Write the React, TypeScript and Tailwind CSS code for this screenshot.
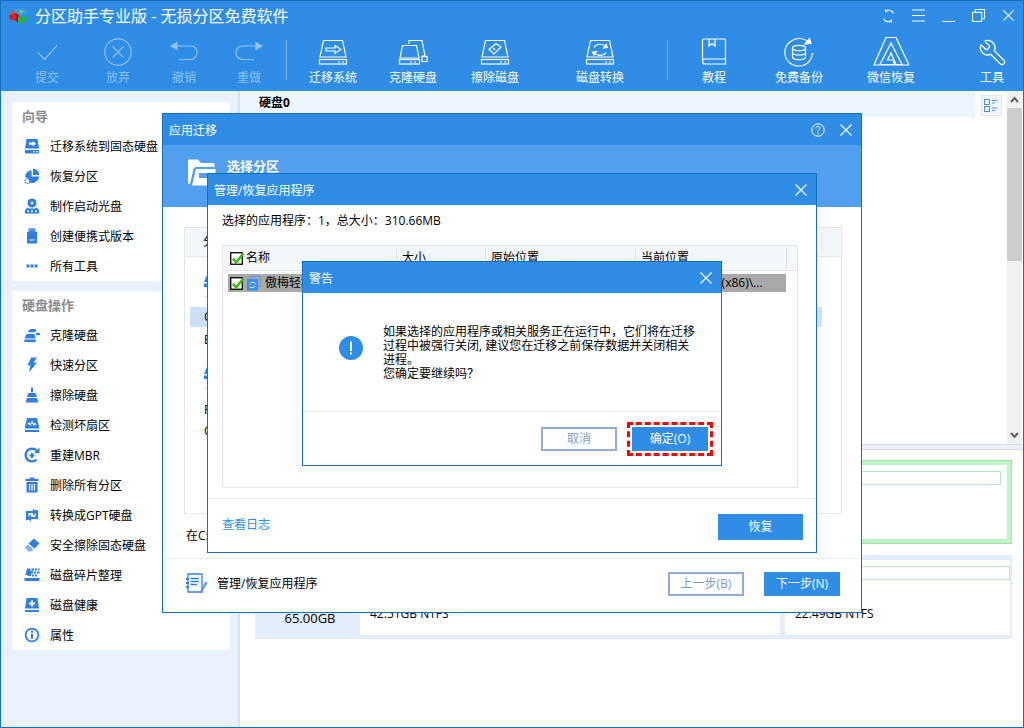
import React from "react";
import { Wrench } from "lucide-react";

const BLUE = "#2f7fe3";

function TIcon({ children }: { children: React.ReactNode }) {
  return (
    <svg width="36" height="30" viewBox="0 0 36 30" fill="none" stroke="currentColor" strokeWidth="1.2">
      {children}
    </svg>
  );
}

const DiskBase = () => (
  <>
    <path d="M8.5 3.5H27.5L31 20H5Z" />
    <rect x="4.5" y="22.5" width="27" height="4.5" />
    <path d="M23 25h2M27 25h2" />
  </>
);

const toolIcons: Record<string, React.ReactNode> = {
  check: <path d="M9 15.5L15.5 22.5L28 8.5" />,
  cancel: (
    <>
      <circle cx="18" cy="15" r="13.2" />
      <path d="M12.5 9.5L23.5 20.5M23.5 9.5L12.5 20.5" />
    </>
  ),
  undo: (
    <>
      <path d="M9 9H24.5C28.5 9 31 12 31 15.5C31 19.5 28 22.5 24.5 22.5H13" />
      <path d="M5 9L11 5.5V12.5Z" fill="currentColor" />
    </>
  ),
  redo: (
    <>
      <path d="M27 9H11.5C7.5 9 5 12 5 15.5C5 19.5 8 22.5 11.5 22.5H23" />
      <path d="M31 9L25 5.5V12.5Z" fill="currentColor" />
    </>
  ),
  migrate: (
    <>
      <DiskBase />
      <path d="M11 11H20V8.5L26 12.5L20 16.5V14H11Z" />
    </>
  ),
  clone: (
    <>
      <path d="M14 7V3.5H27L30 19H27" />
      <path d="M7.5 8.5H21.5L24 21H5Z" />
      <rect x="4.5" y="22.5" width="20" height="4.5" />
      <rect x="27" y="19.5" width="5" height="5" />
      <path d="M15 25h2M19 25h2" />
    </>
  ),
  erase: (
    <>
      <DiskBase />
      <path d="M12 12.5L19 6.5L24 10L17 17Z" />
      <path d="M16 11l2 2" />
    </>
  ),
  convert: (
    <>
      <DiskBase />
      <path d="M12 10.5C14 6.5 21 6 23.5 10M24 15.5C22 19 15 19.5 12.5 15.5" />
      <path d="M25.5 10.5L21.5 11L24 7.5Z M10.5 15L14.5 14.5L12 18Z" fill="currentColor" />
    </>
  ),
  book: (
    <>
      <path d="M9 27C7 27 6.5 25.5 6.5 24V3.5C6.5 2.5 7 2 8 2H28.5C29 2 29.5 2.5 29.5 3V27H9Z" />
      <path d="M6.5 24C6.5 22.5 7.5 22 9 22H29.5" />
      <path d="M13 2V9L16 6.5L19 9V2" />
    </>
  ),
  backup: (
    <>
      <path d="M28 5.5C24 1.5 18 .5 13 2.5C6.5 5 3 11 4 17.5C5 24 11 29 18 29C25 29 31 23.5 31.5 16" />
      <path d="M30 6.5L24 7L28.5 1.5Z" fill="currentColor" />
      <ellipse cx="18" cy="11" rx="6.5" ry="2.6" />
      <path d="M11.5 11V20C11.5 21.5 14.5 22.6 18 22.6C21.5 22.6 24.5 21.5 24.5 20V11M11.5 15.5C11.5 17 14.5 18 18 18C21.5 18 24.5 17 24.5 15.5" />
    </>
  ),
  aomei: (
    <>
      <path d="M13 .5H23L36 28H1Z" />
      <path d="M18 6L29 27.5H23L18 16L14.5 23H20L21.5 27.5H7Z" />
    </>
  ),
};

function Tool({
  icon,
  label,
  cls,
  off,
}: {
  icon: string;
  label: string;
  cls: string;
  off?: boolean;
}) {
  return (
    <div className={`${cls} flex flex-col items-center ${off ? "text-[#8fc0f0]" : "text-white"}`}>
      <div className="flex h-[30px] items-center justify-center">
        {icon === "tool" ? (
          <Wrench size={29} strokeWidth={1.1} className="-scale-x-100" />
        ) : (
          <TIcon>{toolIcons[icon]}</TIcon>
        )}
      </div>
      <span className="mt-[3px] text-[12px] leading-[16px] whitespace-nowrap">{label}</span>
    </div>
  );
}

function SIcon({ children }: { children: React.ReactNode }) {
  return (
    <svg width="16" height="16" viewBox="0 0 16 16" fill={BLUE} className="shrink-0">
      {children}
    </svg>
  );
}

const side: Record<string, React.ReactNode> = {
  a: (
    <path fillRule="evenodd" d="M2.5 1H13.5L15 10.5H1ZM1 12H15V15.5H1ZM5 4.6V6.8H8.6V8.5L12 5.7L8.6 2.9V4.6ZM9 13.2v1h2v-1ZM12 13.2v1h2v-1Z" />
  ),
  b: (
    <>
      <path d="M9 .6C12.5 1 15 3.5 15.4 7H9Z" />
      <path d="M7.6 2.2V8.4H15.2C14.6 12.2 11.8 15 8 15C7 15 6.3 14.8 5.6 14.6C5.9 11.5 4 9.5 1.2 9C1 5.5 3.8 2.4 7.6 2.2Z" />
      <circle cx="3.4" cy="13" r="2.4" fill="none" stroke={BLUE} strokeWidth="1.3" strokeDasharray="1.5 .7" />
    </>
  ),
  c: (
    <path fillRule="evenodd" d="M8 .5A4.5 4.5 0 1 1 8 9.5A4.5 4.5 0 1 1 8 .5ZM8 3.6A1.4 1.4 0 1 0 8 6.4A1.4 1.4 0 1 0 8 3.6ZM3.5 9.5L5 10.5H11L12.5 9.5L15 12V15.5H1V12ZM3 12.5V14H5V12.5ZM7 12.5V14H9V12.5ZM11 12.5V14H13V12.5Z" />
  ),
  d: (
    <path fillRule="evenodd" d="M4.5 .5H11.5V4H13V15.5H3V4H4.5ZM6 2V3H7V2ZM9 2V3H10V2ZM5.5 11.5V12.5H10.5V11.5Z" />
  ),
  e: (
    <>
      <rect x="2.5" y="6.5" width="3" height="3" />
      <rect x="6.5" y="6.5" width="3" height="3" />
      <rect x="10.5" y="6.5" width="3" height="3" />
    </>
  ),
  f: (
    <>
      <path d="M4 5.2C4.5 3 6 2 8 2H11.5L12.5 4.5H11V5.2Z" />
      <rect x="12" y="6" width="4" height="2" />
      <path d="M2.5 7H10.5L11.5 11.5H.5Z" />
      <rect x=".3" y="12.5" width="11.5" height="2.6" />
    </>
  ),
  g: <path d="M7 .5H13L9.5 5.5H13L5 15.5L6.5 8.5H3.5Z" />,
  h: (
    <>
      <rect x="7" y=".5" width="2" height="5" />
      <path d="M4.5 6H11.5L13 10H3Z" />
      <path d="M3 11H13L14.5 15.5H1.5Z" />
    </>
  ),
  i: (
    <path fillRule="evenodd" d="M3 1H13L15 9.5V11.5H1V9.5ZM3 7.5L5 5L6.5 7L8 3.5L10 7L11 5.5L13 8L11 7.5L10 9L8 6L6.5 9L5 7ZM1 13H15V15H1Z" />
  ),
  j: (
    <>
      <path d="M12.6 12.5A6.4 6.4 0 1 1 12.6 3.5" fill="none" stroke={BLUE} strokeWidth="2.4" />
      <path d="M15.5 .5V6H10Z" />
      <path d="M7 6H9V7.5H10.5V9.5H9V11H7V9.5H5.5V7.5H7Z" />
    </>
  ),
  k: (
    <path fillRule="evenodd" d="M5.5 .5H10.5V2H14.5V4H1.5V2H5.5ZM2.5 5H13.5V15.5H2.5ZM5 7V13.5H6.2V7ZM7.4 7V13.5H8.6V7ZM9.8 7V13.5H11V7Z" />
  ),
  l: (
    <>
      <path d="M2 13V4H9V1.5L13 5L9 8.5V6H4.5V13Z" />
      <path d="M14 3V12H7V14.5L3 11L7 7.5V10H11.5V3Z" />
    </>
  ),
  m: (
    <>
      <path d="M10 1.5L15.5 6.5L10.5 11.5L4.5 6.5Z" />
      <path d="M3.8 7.5L9.5 12.5L7.5 14.5H4.5L.8 10.8Z" fill="#7eb1f0" />
    </>
  ),
  n: (
    <>
      <path d="M3 1.5H6.5V4H9V6.5H7V9H3.5V8H1.5Z" />
      <path d="M7.5 1.5H10V3.5H7.5ZM11 1.5H13V3.5H11ZM14 1.5H15.5V3.5H14ZM10 4.5H12V6.5H10ZM13 4.5H15.5V6.5H13ZM8 7.5H10V9.5H8ZM11 7.5H13V9.5H11Z" />
      <rect x=".5" y="11" width="15" height="3" />
    </>
  ),
  o: (
    <path fillRule="evenodd" d="M2.5 1H13.5L15 11.5H1ZM7 3.5V5.5H5V7.5H7V9.5H9V7.5H11V5.5H9V3.5ZM1 13H15V15H1Z" />
  ),
  p: (
    <>
      <circle cx="8" cy="8" r="6.4" fill="none" stroke={BLUE} strokeWidth="1.8" />
      <rect x="7" y="6.8" width="2" height="5" />
      <rect x="7" y="3.8" width="2" height="2" />
    </>
  ),
};

function Item({ i, children }: { i: string; children: React.ReactNode }) {
  return (
    <div className="flex h-[30px] items-center pl-[12px]">
      <SIcon>{side[i]}</SIcon>
      <span className="ml-[10px] pt-[2px] text-[12px] text-black whitespace-nowrap">{children}</span>
    </div>
  );
}

function Close({ size = 14 }: { size?: number }) {
  return (
    <svg width={size} height={size} viewBox="0 0 14 14" stroke="#fff" strokeWidth="1.1" fill="none">
      <path d="M1.5 1.5L12.5 12.5M12.5 1.5L1.5 12.5" />
    </svg>
  );
}

function Check() {
  return (
    <svg width="15" height="15" viewBox="0 0 15 15" className="shrink-0">
      <rect x=".75" y="1.75" width="11.5" height="11.5" fill="#fff" stroke="#000" strokeWidth="1.3" />
      <path d="M3 7.5L6 11.5L13.5 2.5" fill="none" stroke="#3fb80e" strokeWidth="2.6" />
    </svg>
  );
}

function HeadCol({ cls, children }: { cls: string; children: React.ReactNode }) {
  return (
    <div className={`${cls} flex h-full items-center pl-[5px] text-[12px]`}>
      <span className="flex-1 whitespace-nowrap">{children}</span>
      <span className="h-[20px] w-px bg-[#dfe5ee]" />
    </div>
  );
}

export default function App() {
  return (
    <div className="relative flex h-[728px] w-[1024px] flex-col overflow-hidden border border-[#1270bf] bg-white font-['Open_Sans','Noto_Sans_CJK_SC',sans-serif] text-black">
      {/* header */}
      <div className="h-[90px] shrink-0 bg-[#2f8de6]">
        <div className="flex h-[29px] items-center pl-[7px] pr-[8px]">
          <svg width="21" height="18" viewBox="0 0 21 18">
            <path d="M1 8L8 6V14L2 12.5Z" fill="#d81f26" />
            <path d="M8 6L11 8.5L10 16L8 14Z" fill="#a8141a" />
            <path d="M10 10L20 9V12C18 15 14 17 10 16.5Z" fill="#23b14d" />
            <path d="M6 2.5C10 .5 17 1 20 5.5L13 8L6 5Z" fill="#3aa0e8" />
            <path d="M11 3.5L16 4.5L13 6.5Z" fill="#9ad42a" />
            <path d="M1 8L6 3L7.5 6Z" fill="#f04a3a" />
          </svg>
          <span className="ml-[6px] text-[16px] whitespace-nowrap text-white">分区助手专业版 - 无损分区免费软件</span>
          <div className="ml-auto flex items-center gap-[17px]">
            <svg width="13" height="16" viewBox="0 0 14 16" fill="none" stroke="#fff" strokeWidth="1.2">
              <path d="M12.5 5.5C11.5 2.5 8 1 5 2.2M1.5 10.5C2.5 13.5 6 15 9 13.8" />
              <path d="M3 .8L6.2 2.2L4 4.6ZM11 15.2L7.8 13.8L10 11.4Z" fill="#fff" stroke="none" />
            </svg>
            <svg width="13" height="13" viewBox="0 0 13 13" stroke="#fff" strokeWidth="1.1">
              <path d="M0 1H13M0 6.5H13M0 12H13" />
            </svg>
            <svg width="13" height="13" viewBox="0 0 13 13" stroke="#fff" strokeWidth="1.1">
              <path d="M0 12.5H13" />
            </svg>
            <svg width="13" height="13" viewBox="0 0 14 14" fill="none" stroke="#fff" strokeWidth="1.1">
              <rect x=".6" y="3.6" width="9.8" height="9.8" />
              <path d="M3.6 3.5V.6H13.4V10.4H10.5" />
            </svg>
            <Close size={13} />
          </div>
        </div>
        <div className="mt-[7px] flex items-start pl-[11px]">
          <Tool off icon="check" label="提交" cls="w-[70px]" />
          <Tool off icon="cancel" label="放弃" cls="ml-[1px] w-[70px]" />
          <Tool off icon="undo" label="撤销" cls="w-[62px]" />
          <Tool off icon="redo" label="重做" cls="w-[68px]" />
          <span className="mx-[2.5px] mt-[3px] h-[40px] w-px bg-[#79b4ee]" />
          <Tool icon="migrate" label="迁移系统" cls="w-[88px]" />
          <Tool icon="clone" label="克隆硬盘" cls="w-[72px]" />
          <Tool icon="erase" label="擦除磁盘" cls="w-[92px]" />
          <Tool icon="convert" label="磁盘转换" cls="w-[118px]" />
          <span className="mx-[7.5px] mt-[3px] h-[40px] w-px bg-[#79b4ee]" />
          <Tool icon="book" label="教程" cls="w-[78px]" />
          <Tool icon="backup" label="免费备份" cls="w-[92px]" />
          <Tool icon="aomei" label="微信恢复" cls="w-[92px]" />
          <Tool icon="tool" label="工具" cls="ml-[25px] w-[60px]" />
        </div>
      </div>

      {/* body */}
      <div className="flex min-h-0 flex-1">
        <aside className="flex w-[237px] shrink-0 flex-col gap-[10px] bg-[#e9f1fc] pl-[11px] pr-[8px] pt-[11px]">
          <div className="h-[179px] bg-white">
            <div className="flex h-[29px] items-center pl-[10px] text-[13px] font-bold text-[#8c8c8c]">向导</div>
            <Item i="a">迁移系统到固态硬盘</Item>
            <Item i="b">恢复分区</Item>
            <Item i="c">制作启动光盘</Item>
            <Item i="d">创建便携式版本</Item>
            <Item i="e">所有工具</Item>
          </div>
          <div className="h-[359px] bg-white">
            <div className="flex h-[29px] items-center pl-[10px] text-[13px] font-bold text-[#8c8c8c]">硬盘操作</div>
            <Item i="f">克隆硬盘</Item>
            <Item i="g">快速分区</Item>
            <Item i="h">擦除硬盘</Item>
            <Item i="i">检测坏扇区</Item>
            <Item i="j">重建MBR</Item>
            <Item i="k">删除所有分区</Item>
            <Item i="l">转换成GPT硬盘</Item>
            <Item i="m">安全擦除固态硬盘</Item>
            <Item i="n">磁盘碎片整理</Item>
            <Item i="o">磁盘健康</Item>
            <Item i="p">属性</Item>
          </div>
        </aside>
        <div className="w-[2px] shrink-0 bg-[#d8e1ef]" />
        <main className="flex min-w-0 flex-1 flex-col">
          <div className="flex h-[353px] shrink-0">
            <div className="flex h-[26px] w-[735px] shrink-0 items-center bg-[#edf5ff] pl-[19px] pb-[2px] text-[12px] font-bold">
              硬盘0
            </div>
            <div className="ml-[6px] mt-[4px] flex h-[21px] w-[21px] items-center justify-center border border-[#e2e8f2] bg-[#f2f6fc]">
              <svg width="15" height="15" viewBox="0 0 15 15" fill="none" stroke="#4a90e8" strokeWidth="1">
                <rect x=".5" y="1.5" width="5" height="5" />
                <rect x=".5" y="8.5" width="5" height="5" />
                <path d="M8 2.5H13M8 5H11M8 10H13M8 12.5H11" />
              </svg>
            </div>
            <div className="ml-[5px] flex w-[15px] shrink-0 flex-col bg-[#f0f0f0]">
              <div className="flex h-[17px] items-center justify-center">
                <svg width="9" height="7" viewBox="0 0 9 7" fill="none" stroke="#606060" strokeWidth="2">
                  <path d="M1 6L4.5 2L8 6" />
                </svg>
              </div>
              <div className="h-[153px] bg-[#cdcdcd]" />
              <div className="flex-1" />
              <div className="flex h-[17px] items-center justify-center">
                <svg width="9" height="7" viewBox="0 0 9 7" fill="none" stroke="#606060" strokeWidth="2">
                  <path d="M1 1L4.5 5L8 1" />
                </svg>
              </div>
            </div>
          </div>
          <div className="h-[6px] shrink-0 border-y border-[#d3dce8] bg-[#ebf0f8]" />
          <div className="flex flex-1 flex-col gap-[11px] pl-[15px] pt-[10px]">
            <div className="flex h-[84px] w-[757px] border-[5px] border-[#bdf5c7] bg-white outline outline-1 -outline-offset-1 outline-[#a6e0b1]">
              <div className="ml-auto mr-[6px] mt-[6px] h-[14px] w-[700px] border border-[#b6e4c1]" />
            </div>
            <div className="flex h-[84px] w-[757px] border-x-[5px] border-t-[5px] border-b-[4px] border-[#e4edfc] bg-[#e4edfc]">
              <div className="flex w-[100px] shrink-0 items-end justify-center pb-[7px] text-[13px]">65.00GB</div>
              <div className="w-[420px] shrink-0 bg-white pl-[10px] pt-[45px] text-[12px]">42.51GB NTFS</div>
              <div className="ml-[5px] flex-1 bg-white pl-[10px] pt-[6px] text-[12px]">
                <div className="mb-[25px] h-[14px] w-[215px] border border-[#b6e4c1]" />
                22.49GB NTFS
              </div>
            </div>
          </div>
        </main>
      </div>

      {/* dialog 1 */}
      <section className="absolute left-[161px] top-[112px] flex h-[500px] w-[700px] flex-col border border-[#1270bf] bg-white">
        <div className="flex h-[31px] shrink-0 items-center bg-[#2f8de6] pl-[6px] pr-[8px] text-[12px] text-white">
          <span className="pt-[2px]">应用迁移</span>
          <div className="ml-auto flex items-center gap-[14px]">
            <svg width="14" height="14" viewBox="0 0 14 14" fill="none" stroke="#fff" strokeWidth="1">
              <circle cx="7" cy="7" r="6.2" />
              <path d="M5 5.4C5 4 6 3.4 7 3.4C8.3 3.4 9 4.2 9 5.2C9 6.6 7 6.6 7 8.4" />
              <path d="M7 9.6V11" />
            </svg>
            <Close />
          </div>
        </div>
        <div className="flex h-[62px] shrink-0 bg-[#529fef] pl-[24px] pt-[14px]">
          <svg width="29" height="27" viewBox="0 0 29 27" className="shrink-0">
            <path d="M1 2C1 1 1.5.5 2.5.5H11L14 4H26C27 4 27.5 4.5 27.5 5.5V8H9C7.5 8 7 9 6.5 10L3 25H2.5C1.5 25 1 24.5 1 23.5Z" fill="#fff" />
            <path d="M9 10H28.5V25C28.5 26 28 26.5 27 26.5H5Z" fill="#fff" />
            <rect x="12" y="14" width="16.5" height="5" fill="#529fef" />
          </svg>
          <span className="ml-[11px] text-[13px] leading-[14px] font-bold text-white">选择分区</span>
        </div>
        <div className="flex h-[287px] shrink-0 flex-col px-[21px] pt-[20px]">
          <div className="flex h-[287px] w-[658px] shrink-0 flex-col border-[1.5px] border-[#e0e5ee]">
            <div className="flex h-[29px] shrink-0 items-center border-b-[1.5px] border-[#e0e5ee] bg-[#f3f6fb] pl-[18px] pr-[19px] text-[12px]">
              分区
              <span className="ml-auto h-[20px] w-px bg-[#dfe5ee]" />
            </div>
            <div className="flex flex-col pl-[19px] pt-[18px]">
              <svg width="16" height="12" viewBox="0 0 16 12" fill={BLUE}>
                <path d="M3 0H10L13 7H0ZM0 8.5H13V12H0Z" />
              </svg>
              <div className="mt-[9px] h-px w-[600px] bg-[#d8dde5]" />
              <div className="-ml-[14px] mt-[10px] flex h-[20px] w-[632px] items-center bg-[#cce0fb] pl-[14px] text-[12px]">C:</div>
              <div className="mt-[3px] flex h-[20px] items-center text-[12px]">E:</div>
              <svg width="16" height="12" viewBox="0 0 16 12" fill={BLUE} className="mt-[17px]">
                <path d="M3 0H10L13 7H0ZM0 8.5H13V12H0Z" />
              </svg>
              <div className="mt-[9px] h-px w-[600px] bg-[#d8dde5]" />
              <div className="mt-[11px] flex h-[20px] items-center text-[12px]">F:</div>
              <div className="mt-px flex h-[20px] items-center text-[12px]">C:</div>
            </div>
          </div>
        </div>
        <div className="mt-[30px] flex h-[24px] shrink-0 items-center px-[23px] text-[12px]">在C:盘上选择应用程序</div>
        <div className="mt-[10px] flex flex-1 items-center border-t-[1.5px] border-[#e6ebf2] pb-[3px] pl-[23px] pr-[21px]">
          <svg width="22" height="22" viewBox="0 0 22 22" fill="none" stroke={BLUE} strokeWidth="1.3" className="shrink-0">
            <path d="M2 1H16V19H2Z" />
            <path d="M0 6H3M0 10H3M0 14H3" strokeWidth="2" />
            <path d="M4.5 5.5H13M4.5 8.5H13M4.5 11.5H11" />
            <path d="M20.5 9L14.5 20" strokeWidth="2.4" stroke="#5e97ee" />
          </svg>
          <span className="ml-[9px] text-[12px]">管理/恢复应用程序</span>
          <button className="ml-auto h-[24px] w-[76px] border-2 border-[#8fadd8] bg-white text-[12px] text-[#7d9cc9]">上一步(B)</button>
          <button className="ml-[20px] h-[24px] w-[76px] bg-[#2f8de6] text-[12px] text-white">下一步(N)</button>
        </div>
      </section>

      {/* dialog 2 */}
      <section className="absolute left-[206px] top-[172px] flex h-[380px] w-[610px] flex-col border border-[#1270bf] bg-white">
        <div className="flex h-[31px] shrink-0 items-center bg-[#2f8de6] pl-[6px] pr-[8px] text-[12px] text-white">
          <span className="pt-[2px]">管理/恢复应用程序</span>
          <div className="ml-auto">
            <Close />
          </div>
        </div>
        <div className="flex h-[40px] shrink-0 items-center pl-[14px] pb-[9px] text-[12px]">选择的应用程序：1，总大小：310.66MB</div>
        <div className="mx-[14px] flex h-[243px] w-[576px] shrink-0 flex-col border-[1.5px] border-[#e0e5ee]">
          <div className="flex h-[25px] shrink-0 items-center border-b-[1.5px] border-[#e0e5ee] bg-[#f3f6fb] pl-[7px] pr-[10px]">
            <HeadCol cls="w-[172px] -ml-[5px]">
              <span className="flex items-center gap-[1px]">
                <Check />
                名称
              </span>
            </HeadCol>
            <HeadCol cls="w-[89px]">大小</HeadCol>
            <HeadCol cls="w-[150px]">原始位置</HeadCol>
            <HeadCol cls="flex-1">当前位置</HeadCol>
          </div>
          <div className="ml-[5px] mt-[3px] flex h-[18px] w-[558px] items-center bg-[#a9a9a9] pl-[2px] text-[12px] whitespace-nowrap">
            <Check />
            <svg width="15" height="15" viewBox="0 0 15 15" className="ml-[1px] shrink-0">
              <rect x="4" y=".5" width="10" height="10" fill="none" stroke="#5a9ce8" />
              <rect x="1" y="3" width="11" height="11.5" fill="#3a8fe8" />
              <path d="M4 8.5C4.5 6 8 5.5 9.5 7.5M9 9.5C8.5 12 5 12.5 3.5 10.5" fill="none" stroke="#fff" />
            </svg>
            <span className="ml-[4px] w-[156px]">傲梅轻松备份</span>
            <span className="w-[206px]">310.66MB</span>
            <span>C:\Program Files (x86)\...</span>
          </div>
        </div>
        <div className="mt-[10px] flex flex-1 items-center border-t-[1.5px] border-[#e6ebf2] pl-[14px] pr-[13px]">
          <span className="mb-[2px] text-[12px] text-[#2f8de6]">查看日志</span>
          <button className="ml-auto mt-[3px] h-[26px] w-[85px] bg-[#2f8de6] text-[12px] text-white">恢复</button>
        </div>
      </section>

      {/* dialog 3 */}
      <section className="absolute left-[301px] top-[260px] flex h-[205px] w-[420px] flex-col border border-[#1270bf] bg-white">
        <div className="flex h-[31px] shrink-0 items-center bg-[#2f8de6] pl-[6px] pr-[8px] text-[12px] text-white">
          <span className="pt-[2px]">警告</span>
          <div className="ml-auto">
            <Close />
          </div>
        </div>
        <div className="flex h-[119px] shrink-0 items-center border-b-[1.5px] border-[#e6ebf2] pl-[36px]">
          <svg width="24" height="24" viewBox="0 0 24 24" className="mb-[8px] shrink-0">
            <circle cx="12" cy="12" r="12" fill="#2f8de6" />
            <rect x="11" y="5.5" width="2" height="9.5" fill="#fff" />
            <rect x="11" y="16.5" width="2" height="2" fill="#fff" />
          </svg>
          <p className="ml-[20px] mt-[1px] text-[12px] leading-[14px] whitespace-nowrap">
            如果选择的应用程序或相关服务正在运行中，它们将在迁移
            <br />
            过程中被强行关闭, 建议您在迁移之前保存数据并关闭相关
            <br />
            进程。
            <br />
            您确定要继续吗？
          </p>
        </div>
        <div className="flex flex-1 items-center justify-end pr-[8px]">
          <button className="h-[24px] w-[76px] border-2 border-[#8fadd8] bg-white text-[12px] text-[#7d9cc9]">取消</button>
          <div className="ml-[10px] border-[3px] border-dashed border-[#fe0000] p-[2px]">
            <button className="block h-[24px] w-[76px] bg-[#2f8de6] text-[12px] text-white">确定(O)</button>
          </div>
        </div>
      </section>
    </div>
  );
}
